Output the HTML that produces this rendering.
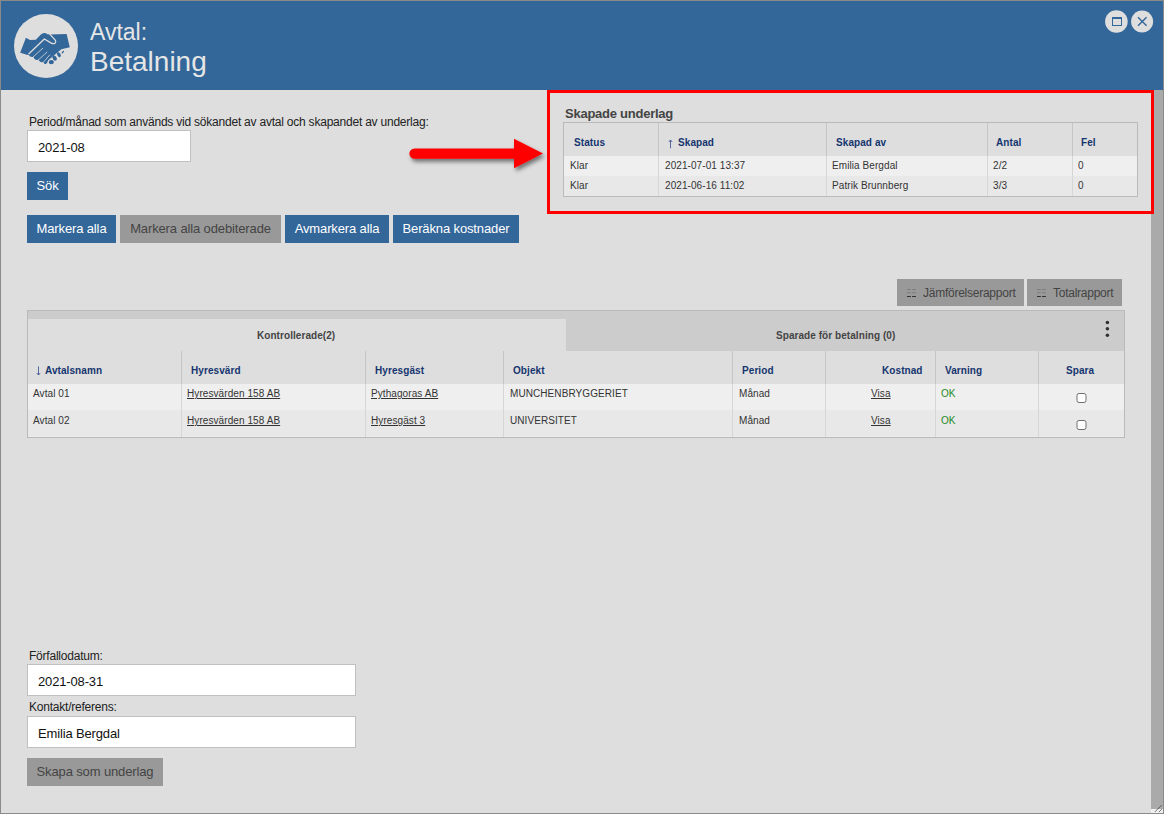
<!DOCTYPE html>
<html lang="sv">
<head>
<meta charset="utf-8">
<title>Avtal: Betalning</title>
<style>
*{box-sizing:border-box;margin:0;padding:0}
html,body{width:1164px;height:814px;overflow:hidden;background:#dedede}
body{font-family:"Liberation Sans",sans-serif;color:#222;position:relative}
.abs{position:absolute}
#frame{position:absolute;left:0;top:0;width:1164px;height:814px;border:1px solid #8a8a8a;border-top-color:#8c8a84;pointer-events:none;z-index:50}
#hdr{position:absolute;left:1px;top:1px;width:1162px;height:89px;background:#336699}
#logo{position:absolute;left:13px;top:13px;width:64px;height:64px;border-radius:50%;background:#dedede}
.t1{position:absolute;left:89px;top:18px;font-size:23px;line-height:26px;color:#e6e6e6;white-space:nowrap}
.t2{position:absolute;left:89px;top:45px;font-size:28px;line-height:32px;color:#e6e6e6;white-space:nowrap}
.cbtn{position:absolute;top:10px;width:22px;height:22px;border-radius:50%;background:#dedede}
.lbl{position:absolute;font-size:12px;line-height:14px;color:#222;white-space:nowrap;letter-spacing:-0.22px}
.inp{position:absolute;background:#fff;border:1px solid #c0c0c0;font-size:13px;color:#111;padding-left:10px;padding-top:3px;white-space:nowrap;height:32px;line-height:28px;letter-spacing:-0.15px}
.btn{position:absolute;height:28px;line-height:28px;font-size:13px;color:#fff;background:#336699;text-align:center;white-space:nowrap;letter-spacing:-0.13px}
.btn.g{background:#999;color:#444}
#sb{position:absolute;left:1151px;top:90px;width:12px;height:719px;background:#aaa}
#grip{position:absolute;left:1151px;top:809px;width:12px;height:4px;background:#f0f0f0}

.ci{position:absolute}
#red{position:absolute;left:547px;top:90px;width:607px;height:124px;border:3px solid #fe0000;z-index:20}
.h2{position:absolute;left:565px;top:106px;font-size:13px;line-height:15px;font-weight:bold;color:#444;white-space:nowrap;letter-spacing:-0.25px}
.tb{position:absolute;border:1px solid #bababa;background:#dedede;overflow:hidden}
.row{position:absolute;left:0;right:0}
.th{position:absolute;font-size:10px;line-height:12px;font-weight:bold;color:#15356f;white-space:nowrap;letter-spacing:0.08px}
.td{position:absolute;font-size:10px;line-height:12px;color:#333;white-space:nowrap;letter-spacing:0.08px}
.td u{text-decoration:underline;text-underline-offset:1px}
.vs{position:absolute;width:1px;background:#c6c6c6}
.vs2{position:absolute;width:1px;background:#d6d6d6}
.tab{position:absolute;font-size:10px;line-height:12px;font-weight:bold;color:#444;white-space:nowrap;letter-spacing:0.06px}
.cb{position:absolute;width:11px;height:11px;border:1px solid #6e6e6e;border-radius:2.5px;background:#fff}
.rb{position:absolute;top:279px;height:27px;background:#999;color:#444;font-size:12px;line-height:29px;white-space:nowrap;letter-spacing:-0.25px}
</style>
</head>
<body>
<div id="hdr">
  <div id="logo"></div>
  <div class="abs" style="left:9px;top:9px;width:72px;height:72px"><svg viewBox="0 0 814 814" width="72" height="72">
<path fill="#336699" d="M180,313 L226,338 L292,335 L346,280 Q366,262 386,261 Q406,262 424,273 L455,277 L640,272 L676,422 L580,444 L432,569 L418,600 Q405,620 386,606 L377,590 Q348,597 329,574 L321,563 Q290,568 273,547 L264,529 Q230,538 211,508 L191,506 L115,482 Z"/>
<g fill="#336699">
<ellipse cx="467" cy="589" rx="29" ry="25"/>
<ellipse cx="505" cy="543" rx="22" ry="31" transform="rotate(-35 505 543)"/>
<ellipse cx="553" cy="505" rx="18" ry="30" transform="rotate(-30 553 505)"/>
<ellipse cx="597" cy="476" rx="9" ry="18" transform="rotate(35 597 476)"/>
</g>
<g stroke="#dedede" stroke-linecap="round" stroke-linejoin="round" fill="none">
<path stroke-width="15" d="M452,276 L514,344 Q524,364 508,377 Q490,386 462,371 L388,328 L214,495"/>
<path stroke-width="9" d="M370,433 L262,530"/>
<path stroke-width="9" d="M417,477 L319,566"/>
<path stroke-width="9" d="M449,509 L374,594"/>
</g>
</svg></div>
  <div class="t1">Avtal:</div>
  <div class="t2">Betalning</div>
  <svg class="abs" style="left:1099px;top:5px" width="60" height="32" viewBox="1100 6 60 32">
    <circle cx="1116.4" cy="21.5" r="11.3" fill="#dedede"/><circle cx="1142.1" cy="21.5" r="11" fill="#dedede"/>
    <rect x="1112.5" y="18" width="9" height="7.5" fill="none" stroke="#336699" stroke-width="1"/><rect x="1112" y="17" width="10" height="2" fill="#336699"/>
    <path d="M1138,17.2 L1146.6,25.8 M1146.6,17.2 L1138,25.8" stroke="#336699" stroke-width="1.4" fill="none"/>
  </svg>
</div>

<div class="lbl" style="left:29px;top:115px">Period/månad som används vid sökandet av avtal och skapandet av underlag:</div>
<div class="inp" style="left:27px;top:130px;width:164px">2021-08</div>
<div class="btn" style="left:27px;top:172px;width:41px">Sök</div>

<div class="btn" style="left:27px;top:215px;width:89px">Markera alla</div>
<div class="btn g" style="left:120px;top:215px;width:161px">Markera alla odebiterade</div>
<div class="btn" style="left:285px;top:215px;width:104px">Avmarkera alla</div>
<div class="btn" style="left:393px;top:215px;width:126px">Beräkna kostnader</div>


<!-- red arrow -->
<svg class="abs" style="left:395px;top:125px;z-index:21" width="160" height="60" viewBox="395 125 160 60">
  <defs><filter id="sh" x="-10%" y="-30%" width="120%" height="170%"><feGaussianBlur in="SourceAlpha" stdDeviation="1.9"/><feOffset dx="1.5" dy="2.5"/><feComponentTransfer><feFuncA type="linear" slope="0.5"/></feComponentTransfer><feMerge><feMergeNode/><feMergeNode in="SourceGraphic"/></feMerge></filter></defs>
  <g filter="url(#sh)" fill="#fe0000">
    <path d="M414.5,148.4 L514,148.4 L514,138.8 L543,153.5 L514,168.3 L514,158.7 L414.5,158.7 A5.15,5.15 0 0 1 414.5,148.4 Z"/>
  </g>
</svg>

<!-- Skapade underlag -->
<div id="red"></div>
<div class="h2">Skapade underlag</div>
<div class="tb" style="left:563px;top:122px;width:575px;height:75px">
  <div class="row" style="top:33px;height:20px;background:#efefef"></div>
  <div class="row" style="top:53px;height:20px;background:#e8e8e8"></div>
  <div class="vs" style="left:94px;top:0;height:33px"></div><div class="vs2" style="left:94px;top:33px;height:40px"></div>
  <div class="vs" style="left:262px;top:0;height:33px"></div><div class="vs2" style="left:262px;top:33px;height:40px"></div>
  <div class="vs" style="left:423px;top:0;height:33px"></div><div class="vs2" style="left:423px;top:33px;height:40px"></div>
  <div class="vs" style="left:508px;top:0;height:33px"></div><div class="vs2" style="left:508px;top:33px;height:40px"></div>
  <div class="th" style="left:10px;top:14px">Status</div>
  <svg class="abs" style="left:102.6px;top:15.5px" width="7" height="10" viewBox="0 0 7 10"><path d="M3.5,1 L3.5,9.3 M1.8,3 L3.5,1 L5.2,3" fill="none" stroke="#34508c" stroke-width="0.9" opacity="0.9"/></svg>
  <div class="th" style="left:114px;top:14px">Skapad</div>
  <div class="th" style="left:272px;top:14px">Skapad av</div>
  <div class="th" style="left:432px;top:14px">Antal</div>
  <div class="th" style="left:517px;top:14px">Fel</div>
  <div class="td" style="left:6px;top:37px">Klar</div>
  <div class="td" style="left:101px;top:37px">2021-07-01 13:37</div>
  <div class="td" style="left:268px;top:37px">Emilia Bergdal</div>
  <div class="td" style="left:429px;top:37px">2/2</div>
  <div class="td" style="left:514px;top:37px">0</div>
  <div class="td" style="left:6px;top:57px">Klar</div>
  <div class="td" style="left:101px;top:57px">2021-06-16 11:02</div>
  <div class="td" style="left:268px;top:57px">Patrik Brunnberg</div>
  <div class="td" style="left:429px;top:57px">3/3</div>
  <div class="td" style="left:514px;top:57px">0</div>
</div>

<!-- report buttons -->
<div class="rb" style="left:897px;width:127px;padding-left:26px">Jämförelserapport</div>
<div class="rb" style="left:1027px;width:95px;padding-left:26px">Totalrapport</div>
<svg class="abs" style="left:906px;top:288px" width="11" height="10" viewBox="0 0 11 10"><g fill="#7c7c7c"><rect x="1" y="1" width="3.8" height="1"/><rect x="6.1" y="1" width="3.8" height="1"/><rect x="1" y="4.2" width="3.8" height="1"/><rect x="6.1" y="4.2" width="3.8" height="1"/></g><g fill="#303030"><rect x="1" y="8" width="3.8" height="1"/><rect x="6.1" y="8" width="3.8" height="1"/></g></svg>
<svg class="abs" style="left:1036px;top:288px" width="11" height="10" viewBox="0 0 11 10"><g fill="#7c7c7c"><rect x="1" y="1" width="3.8" height="1"/><rect x="6.1" y="1" width="3.8" height="1"/><rect x="1" y="4.2" width="3.8" height="1"/><rect x="6.1" y="4.2" width="3.8" height="1"/></g><g fill="#303030"><rect x="1" y="8" width="3.8" height="1"/><rect x="6.1" y="8" width="3.8" height="1"/></g></svg>

<!-- main grid -->
<div class="tb" style="left:27px;top:310px;width:1098px;height:128px;background:#cccccc">
  <div class="abs" style="left:0;top:8px;width:538px;height:33px;background:#dedede"></div>
  <div class="row" style="top:40px;height:33px;background:#dedede"></div>
  <div class="row" style="top:73px;height:26px;background:#efefef"></div>
  <div class="row" style="top:99px;height:27px;background:#e8e8e8;border-bottom:1px solid #ececec"></div>
  <div class="vs" style="left:153px;top:40px;height:33px"></div><div class="vs2" style="left:153px;top:73px;height:53px"></div>
  <div class="vs" style="left:337px;top:40px;height:33px"></div><div class="vs2" style="left:337px;top:73px;height:53px"></div>
  <div class="vs" style="left:475px;top:40px;height:33px"></div><div class="vs2" style="left:475px;top:73px;height:53px"></div>
  <div class="vs" style="left:704px;top:40px;height:33px"></div><div class="vs2" style="left:704px;top:73px;height:53px"></div>
  <div class="vs" style="left:797px;top:40px;height:33px"></div><div class="vs2" style="left:797px;top:73px;height:53px"></div>
  <div class="vs" style="left:907px;top:40px;height:33px"></div><div class="vs2" style="left:907px;top:73px;height:53px"></div>
  <div class="vs" style="left:1010px;top:40px;height:33px"></div><div class="vs2" style="left:1010px;top:73px;height:53px"></div>
  <svg class="abs" style="left:6.5px;top:55px" width="7" height="10" viewBox="0 0 7 10"><path d="M3.5,0.4 L3.5,9 M1.8,7 L3.5,9 L5.2,7" fill="none" stroke="#34508c" stroke-width="0.9" opacity="0.9"/></svg>
  <div class="th" style="left:17px;top:54px">Avtalsnamn</div>
  <div class="th" style="left:163px;top:54px">Hyresvärd</div>
  <div class="th" style="left:347px;top:54px">Hyresgäst</div>
  <div class="th" style="left:485px;top:54px">Objekt</div>
  <div class="th" style="left:714px;top:54px">Period</div>
  <div class="th" style="left:854px;top:54px">Kostnad</div>
  <div class="th" style="left:917px;top:54px">Varning</div>
  <div class="th" style="left:1038px;top:54px">Spara</div>
  <div class="td" style="left:5px;top:77px">Avtal 01</div>
  <div class="td" style="left:159px;top:77px"><u>Hyresvärden 158 AB</u></div>
  <div class="td" style="left:343px;top:77px"><u>Pythagoras AB</u></div>
  <div class="td" style="left:482px;top:77px">MUNCHENBRYGGERIET</div>
  <div class="td" style="left:711px;top:77px">Månad</div>
  <div class="td" style="left:843px;top:77px"><u>Visa</u></div>
  <div class="td" style="left:913px;top:77px;color:#1e8a1e">OK</div>
  <svg class="abs" style="left:1047px;top:81px" width="13" height="13" viewBox="0 0 13 13"><rect x="2" y="1.5" width="9" height="9" rx="2" ry="2" fill="#fff" stroke="#707070" stroke-width="1"/></svg>
  <div class="td" style="left:5px;top:104px">Avtal 02</div>
  <div class="td" style="left:159px;top:104px"><u>Hyresvärden 158 AB</u></div>
  <div class="td" style="left:343px;top:104px"><u>Hyresgäst 3</u></div>
  <div class="td" style="left:482px;top:104px">UNIVERSITET</div>
  <div class="td" style="left:711px;top:104px">Månad</div>
  <div class="td" style="left:843px;top:104px"><u>Visa</u></div>
  <div class="td" style="left:913px;top:104px;color:#1e8a1e">OK</div>
  <svg class="abs" style="left:1047px;top:108px" width="13" height="13" viewBox="0 0 13 13"><rect x="2" y="1.5" width="9" height="9" rx="2" ry="2" fill="#fff" stroke="#707070" stroke-width="1"/></svg>
  <div class="tab" style="left:229px;top:19px">Kontrollerade(2)</div>
  <div class="tab" style="left:748px;top:19px">Sparade för betalning (0)</div>
  <svg class="abs" style="left:1076px;top:9px" width="8" height="20" viewBox="0 0 8 20"><g fill="#303030"><circle cx="3.4" cy="2.45" r="1.75"/><circle cx="3.4" cy="8.85" r="1.75"/><circle cx="3.4" cy="15.3" r="1.75"/></g></svg>
</div>


<div class="lbl" style="left:29px;top:649px">Förfallodatum:</div>
<div class="inp" style="left:27px;top:664px;width:329px">2021-08-31</div>
<div class="lbl" style="left:29px;top:700px">Kontakt/referens:</div>
<div class="inp" style="left:27px;top:716px;width:329px">Emilia Bergdal</div>
<div class="btn g" style="left:27px;top:758px;width:136px">Skapa som underlag</div>

<div id="sb"></div>
<div id="grip"></div>
<svg class="abs" style="left:1151px;top:802px;z-index:40" width="12" height="11" viewBox="1151 802 12 11"><g stroke="#2e2e2e" stroke-width="1" stroke-dasharray="0.9 0.55" fill="none"><path d="M1155,811.8 L1161.8,805"/><path d="M1159.2,811.8 L1161.8,809.2"/></g></svg>
<div id="frame"></div>
</body>
</html>
